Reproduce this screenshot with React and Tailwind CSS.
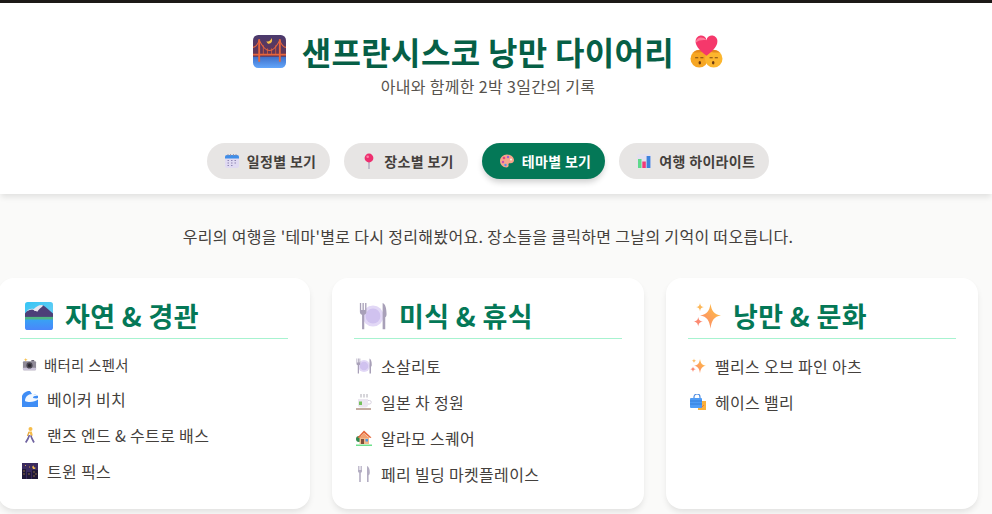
import React from "react";

const BridgeIcon = ({ className }) => (
  <svg viewBox="0 0 32 32" className={className}>
    <defs>
      <linearGradient id="bridgeSky" x1="0" y1="0" x2="0" y2="1">
        <stop offset="0" stopColor="#4a3a6e" />
        <stop offset="1" stopColor="#6a3550" />
      </linearGradient>
      <linearGradient id="bridgeSea" x1="0" y1="0" x2="0" y2="1">
        <stop offset="0" stopColor="#3f6fc8" />
        <stop offset="1" stopColor="#62a6fb" />
      </linearGradient>
    </defs>
    <path d="M5 0h22a5 5 0 0 1 5 5v17H0V5a5 5 0 0 1 5-5z" fill="url(#bridgeSky)" />
    <path d="M0 21h32v6a5 5 0 0 1-5 5H5a5 5 0 0 1-5-5z" fill="url(#bridgeSea)" />
    <path d="M13 6c2 .8 4.200-.2 5-3 1.500 3-.4 5.500-2.500 5.500-1.200 0-2.100-1-2.500-2.500z" fill="#f7c04a" />
    <path d="M6 4v22M26 4v22" stroke="#e8663c" strokeWidth="1.800" />
    <path d="M0 19h32" stroke="#e8663c" strokeWidth="1.800" />
    <path d="M0 12c2 0 5-3 6-7 3 6 7 10 10 10s7-4 10-10c1 4 4 7 6 7" fill="none" stroke="#e8663c" strokeWidth="1" />
    <path d="M10 10v9M14 13v6M18 13v6M22 10v9" stroke="#e8663c" strokeWidth=".7" />
  </svg>
);

const KissIcon = ({ className }) => (
  <svg viewBox="0 0 32 32" className={className}>
    <circle cx="9" cy="23" r="8.500" fill="#f6a623" />
    <circle cx="23" cy="23" r="8.500" fill="#fcb62e" />
    <path d="M3 17c2-3 9-4 12-1-3 1-8 1-12 1zM17 16c3-3 10-2 12 1-4 0-8 0-12-1z" fill="#e58a1d" />
    <path d="M5 22h3M10 22h3M19 22h3M24 22h3" stroke="#7a4a12" strokeWidth="1" />
    <ellipse cx="9.500" cy="27" rx="1.200" ry="1.700" fill="#6b3a10" />
    <ellipse cx="22.500" cy="27" rx="1.200" ry="1.700" fill="#6b3a10" />
    <path d="M16 20C8 14 5.500 10 5.500 6.500A5.200 5.200 0 0 1 16 5 5.200 5.200 0 0 1 26.500 6.500c0 3.500-2.500 7.500-10.500 13.500z" fill="#f5386b" />
    <path d="M10 2.500c-3 .5-4.500 3-4.500 5 3-3 8-3 10.500-2.500-1.500-2-4-2.700-6-2.500z" fill="#ff7a9a" />
  </svg>
);

const CalendarIcon = ({ className }) => (
  <svg viewBox="0 0 16 16" className={className}>
    <rect x="1" y="2" width="14" height="13" rx="2" fill="#e0daf2" />
    <path d="M3 2h10a2 2 0 0 1 2 2v1.500H1V4a2 2 0 0 1 2-2z" fill="#3f8ee8" />
    <path d="M4 1v2M6.500 1v2M9.500 1v2M12 1v2" stroke="#8d8aa8" strokeWidth=".8" />
    <path d="M3.500 7.500h1.500M7 7.500h1.500M10.500 7.500h1.500M3.500 10h1.500M7 10h1.500M10.500 10h1.500M3.500 12.500h1.500M7 12.500h1.500" stroke="#8f88b4" strokeWidth="1.100" />
  </svg>
);

const PinIcon = ({ className }) => (
  <svg viewBox="0 0 16 16" className={className}>
    <path d="M8 8v8" stroke="#b0abc0" strokeWidth="1.400" />
    <circle cx="8" cy="5" r="4.400" fill="#ee2f6f" />
    <circle cx="6.700" cy="3.700" r="1.300" fill="#fb85a8" />
  </svg>
);

const PaletteIcon = ({ className }) => (
  <svg viewBox="0 0 16 16" className={className}>
    <path d="M8 1.500c4 0 7 2.700 7 5.800 0 2.400-2.200 3.200-3.800 2.900-1.200-.2-2 .5-1.700 1.600.4 1.500-.5 2.700-2 2.700C3.800 14.500 1 11.500 1 8s3-6.500 7-6.500z" fill="#f7a58c" />
    <circle cx="5" cy="5" r="1.300" fill="#e0457b" />
    <circle cx="9" cy="4" r="1.200" fill="#9c5fd6" />
    <circle cx="4" cy="9" r="1.200" fill="#c44fb0" />
    <circle cx="6.500" cy="12" r="1.200" fill="#4f8ef0" />
    <circle cx="12" cy="6.500" r="1.100" fill="#fff1e6" />
  </svg>
);

const ChartIcon = ({ className }) => (
  <svg viewBox="0 0 16 16" className={className}>
    <rect x="1" y="1" width="14" height="14" rx="1" fill="#e4e0ee" />
    <rect x="2" y="6" width="3.500" height="9" fill="#5fd98a" />
    <rect x="6.300" y="8.500" width="3.500" height="6.500" fill="#f03a78" />
    <rect x="10.600" y="3" width="3.800" height="12" fill="#3d82dc" />
  </svg>
);

const LakeIcon = ({ className }) => (
  <svg viewBox="0 0 32 32" className={className}>
    <defs>
      <linearGradient id="lakeSky" x1="0" y1="0" x2="1" y2="1">
        <stop offset="0" stopColor="#35c4f4" />
        <stop offset="1" stopColor="#6fd0f5" />
      </linearGradient>
      <linearGradient id="lakeWater" x1="0" y1="0" x2="0" y2="1">
        <stop offset="0" stopColor="#38a2f4" />
        <stop offset="1" stopColor="#4a86fb" />
      </linearGradient>
    </defs>
    <path d="M3 0h26a3 3 0 0 1 3 3v15H0V3a3 3 0 0 1 3-3z" fill="url(#lakeSky)" />
    <path d="M0 13c3-4 7-5 10-4 3-3 8-6 11-5 3 2 7 6 11 9v6H0z" fill="#4d3f78" />
    <path d="M0 13c3-4 7-5 10-4 1 2 3 1 4 2 2-3 4-4 7-7-3-2-8 1-11 4-3-1-7 0-10 5z" fill="#e9e6ee" />
    <path d="M0 17h32v4H0z" fill="#4fb583" />
    <path d="M0 20h32v9a3 3 0 0 1-3 3H3a3 3 0 0 1-3-3z" fill="url(#lakeWater)" />
  </svg>
);

const PlateIcon = ({ className }) => (
  <svg viewBox="0 0 32 32" className={className}>
    <circle cx="16" cy="16" r="12" fill="#e2d8f6" />
    <circle cx="16" cy="16" r="8.500" fill="#d0c2ef" />
    <path d="M1 1v10c0 2 1 3 2.500 3.500V31h2.500V14.500C7.500 14 8.500 13 8.500 11V1H7v8H5.500V1H4v8H2.500V1z" fill="#a8a0b8" />
    <path d="M27 1c3 1 4.500 6 4.500 13 0 2-1 3.500-1.500 3.500V31h-3z" fill="#a8a0b8" />
  </svg>
);

const SparklesIcon = ({ className }) => (
  <svg viewBox="0 0 32 32" className={className}>
    <defs>
      <linearGradient id="sparkle" x1="1" y1="0" x2="0" y2="1">
        <stop offset="0" stopColor="#ffc93f" />
        <stop offset="1" stopColor="#fb7f70" />
      </linearGradient>
    </defs>
    <path d="M20 2c1.500 9 4 12 12 13.500-8 1.500-10.500 5-12 15-1.500-10-4-13.500-12-15C16 14 18.500 11 20 2z" fill="url(#sparkle)" />
    <path d="M8 1c.5 3.200 1.500 4.200 4.500 4.700C9.500 6.200 8.500 7.200 8 10.500c-.5-3.300-1.500-4.300-4.500-4.800C6.500 5.200 7.500 4.200 8 1z" fill="#fdb85a" />
    <path d="M6 17c.6 3.500 1.800 4.700 5.500 5.300C7.800 23 6.600 24.200 6 28c-.6-3.800-1.800-5-5.500-5.700C4.200 21.700 5.400 20.500 6 17z" fill="#fb8a72" />
  </svg>
);

const CameraIcon = ({ className }) => (
  <svg viewBox="0 0 16 16" className={className}>
    <path d="M4 1l.6 1.500L6 3 4.600 3.500 4 5l-.6-1.500L2 3l1.400-.5z" fill="#f7c04a" />
    <rect x="1" y="4.500" width="14" height="9.500" rx="1" fill="#8f8a98" />
    <rect x="1" y="11.500" width="14" height="2.500" rx=".8" fill="#c9c2d8" />
    <rect x="10" y="3.200" width="3" height="1.500" fill="#6e6878" />
    <circle cx="8" cy="9" r="3.300" fill="#4a4652" />
    <circle cx="8" cy="9" r="1.700" fill="#26242c" />
  </svg>
);

const WaveIcon = ({ className }) => (
  <svg viewBox="0 0 16 16" className={className}>
    <path d="M0 5C1 2 4 0 8 0h8v16H0z" fill="#3f8df5" />
    <path d="M3 10c0-4 3-7 7-7 2 0 4 .5 6 2-3-.5-5 .5-5 2 1.500 0 3.500 1 5 0v1.500c-2 1.500-5 2.500-8 2.500-2 0-4-.2-5-1z" fill="#f2f8ff" />
    <path d="M10 3c2 0 4 .5 6 2V0H8z" fill="#ffffff" />
  </svg>
);

const WalkerIcon = ({ className }) => (
  <svg viewBox="0 0 16 16" className={className}>
    <circle cx="8.500" cy="2" r="2" fill="#f6bd4a" />
    <path d="M6.500 4.500h3.300l1 4-2 .5v-.5z" fill="#f6bd4a" />
    <path d="M7 5L5.500 9" stroke="#e9a93a" strokeWidth="1.300" />
    <path d="M7.500 8L5.800 12 3.700 15.500M8.800 8.500l1.200 3.200 2 3.800" fill="none" stroke="#6f63a0" strokeWidth="1.700" />
  </svg>
);

const CityIcon = ({ className }) => (
  <svg viewBox="0 0 16 16" className={className}>
    <rect width="16" height="16" fill="#3a2a5e" />
    <path d="M0 6h4v10H0zM5 9h4v7H5zM10 7h6v9h-6z" fill="#1f1838" />
    <path d="M11.500 2.500a1.800 1.800 0 1 0 2.300 2.300 2.200 2.200 0 0 1-2.300-2.300z" fill="#f7c04a" />
    <path d="M1.500 8h1M1.500 11h1M6.500 11h1M11.500 9h1M13.500 11h1M11.500 13h1M3 2.500h.8M7 4h.8" stroke="#f2b84a" strokeWidth="1" />
  </svg>
);

const TeaIcon = ({ className }) => (
  <svg viewBox="0 0 16 16" className={className}>
    <path d="M5 0v3.500M8 0v3.500M11 0v3.500" stroke="#9b97a2" strokeWidth=".8" />
    <path d="M2 5h10v6c0 1.500-1 2.500-2.500 2.500h-5C3 13.500 2 12.500 2 11z" fill="#ebe6f0" />
    <path d="M12 6.500h1.500a1.500 1.500 0 0 1 0 3.500H12" fill="none" stroke="#d8d2df" strokeWidth="1" />
    <rect x="3" y="7.500" width="3" height="3.500" fill="#74c15c" />
    <path d="M0 15h15" stroke="#8a5a44" strokeWidth="1" />
  </svg>
);

const HouseIcon = ({ className }) => (
  <svg viewBox="0 0 16 16" className={className}>
    <circle cx="3" cy="9" r="3" fill="#2f8a4e" />
    <rect x="3.500" y="7" width="9.500" height="7" fill="#f2b98c" />
    <path d="M8 .5L15.500 7.500 14 8 8 3 3 8 1.500 7.500z" fill="#e4683c" />
    <path d="M8 3l5 5H3z" fill="#f2a070" />
    <rect x="5" y="9" width="3" height="5" fill="#80503a" />
    <rect x="9.500" y="9" width="2.500" height="2.500" fill="#4a9ae8" />
    <path d="M0 14.500h16V16H0z" fill="#6fe08c" />
  </svg>
);

const ForkIcon = ({ className }) => (
  <svg viewBox="0 0 16 16" className={className}>
    <path d="M2 0v5c0 1 .5 1.500 1.200 1.800V16h1.600V6.800C5.500 6.500 6 6 6 5V0H5.200v4H4.400V0H3.600v4h-.8V0z" fill="#b3adc2" />
    <path d="M11 0c1.800.5 2.800 3 2.800 6.500 0 1.500-.5 2.500-1.200 2.800V16H11z" fill="#b3adc2" />
  </svg>
);

const BagsIcon = ({ className }) => (
  <svg viewBox="0 0 16 16" className={className}>
    <rect x="8" y="7" width="8" height="9" fill="#fbb13c" />
    <path d="M11 14l3-3" stroke="#e8663c" strokeWidth=".8" />
    <path d="M4 4V3a3 3 0 0 1 6 0v1" fill="none" stroke="#4d8be0" strokeWidth="1.200" />
    <rect y="4" width="12" height="10" rx="1" fill="#4f9cf5" />
    <path d="M0 7h12M0 10h12" stroke="#2f76d2" strokeWidth=".8" />
  </svg>
);

const tabs = [
  { label: "일정별 보기", Icon: CalendarIcon },
  { label: "장소별 보기", Icon: PinIcon },
  { label: "테마별 보기", Icon: PaletteIcon, active: true },
  { label: "여행 하이라이트", Icon: ChartIcon },
];

const themes = [
  {
    title: "자연 & 경관",
    Icon: LakeIcon,
    items: [
      { name: "배터리 스펜서", Icon: CameraIcon, small: true },
      { name: "베이커 비치", Icon: WaveIcon },
      { name: "랜즈 엔드 & 수트로 배스", Icon: WalkerIcon },
      { name: "트윈 픽스", Icon: CityIcon },
    ],
  },
  {
    title: "미식 & 휴식",
    Icon: PlateIcon,
    items: [
      { name: "소살리토", Icon: PlateIcon },
      { name: "일본 차 정원", Icon: TeaIcon },
      { name: "알라모 스퀘어", Icon: HouseIcon },
      { name: "페리 빌딩 마켓플레이스", Icon: ForkIcon },
    ],
  },
  {
    title: "낭만 & 문화",
    Icon: SparklesIcon,
    items: [
      { name: "팰리스 오브 파인 아츠", Icon: SparklesIcon },
      { name: "헤이스 밸리", Icon: BagsIcon },
    ],
  },
];

export default function App() {
  return (
    <div className="h-[514px] overflow-hidden bg-[#fafaf9] border-t-[3px] border-[#1c1917] font-['Noto_Sans_CJK_KR',sans-serif] tracking-[0.02em] text-[#44403c]">
      {/* Header */}
      <header className="bg-white h-[191px] pt-[28px] shadow-[0_4px_6px_-1px_rgba(0,0,0,0.1)]">
        <div className="w-[976px]">
          <h1 className="flex items-center justify-center gap-[16px] text-[32px] leading-[40px] font-bold text-[#065f46]">
            <BridgeIcon className="w-[33px] h-[33px]" />
            <span>샌프란시스코 낭만 다이어리</span>
            <KissIcon className="w-[33px] h-[33px]" />
          </h1>
          <p className="mt-[3px] text-center text-[16px] leading-[24px] text-[#57534e]">
            아내와 함께한 2박 3일간의 기록
          </p>
          <nav className="mt-[45px] flex justify-center gap-[14px]">
            {tabs.map(({ label, Icon, active }) => (
              <button
                key={label}
                className={
                  active
                    ? "flex items-center gap-[7px] h-[36px] pl-[17px] pr-[14px] rounded-full bg-[#047857] text-white text-[14px] font-bold shadow-[0_4px_6px_-1px_rgba(0,0,0,0.2)]"
                    : "flex items-center gap-[7px] h-[36px] pl-[17px] pr-[14px] rounded-full bg-[#e7e5e4] text-[#44403c] text-[14px] font-bold"
                }
              >
                <Icon className="w-[16px] h-[16px]" />
                {label}
              </button>
            ))}
          </nav>
        </div>
      </header>

      {/* Main */}
      <p className="w-[976px] mt-[30px] text-center text-[16px] leading-[24px] text-[#44403c]">
        우리의 여행을 '테마'별로 다시 정리해봤어요. 장소들을 클릭하면 그날의 기억이 떠오릅니다.
      </p>
      <div className="mt-[30px] -ml-[2px] w-[980px] grid grid-cols-3 gap-[22px]">
        {themes.map(({ title, Icon, items }) => (
          <section
            key={title}
            className="h-[231px] bg-white rounded-[16px] px-[22px] pt-[20px] shadow-[0_4px_6px_-1px_rgba(0,0,0,0.1)]"
          >
            <h2 className="flex items-center gap-[12px] pl-[5px] pb-[4px] border-b border-[#a7f3d0] text-[27px] leading-[36px] font-bold text-[#047857]">
              <Icon className="w-[28px] h-[28px]" />
              {title}
            </h2>
            <ul className="mt-[9px] pl-[2px]">
              {items.map(({ name, Icon: ItemIcon, small }) => (
                <li
                  key={name}
                  className={
                    small
                      ? "flex items-center gap-[7px] h-[33px] text-[14.400px] text-[#44403c]"
                      : "flex items-center gap-[9px] h-[36px] text-[16px] text-[#44403c]"
                  }
                >
                  <ItemIcon className={small ? "w-[15px] h-[15px]" : "w-[16px] h-[16px]"} />
                  {name}
                </li>
              ))}
            </ul>
          </section>
        ))}
      </div>
    </div>
  );
}
